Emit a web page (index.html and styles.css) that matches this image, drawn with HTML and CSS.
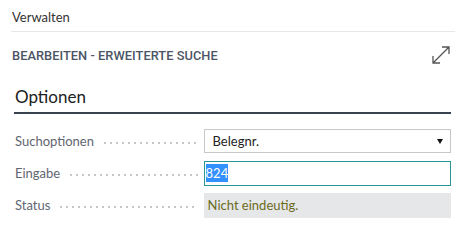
FILE: index.html
```html
<!DOCTYPE html>
<html>
<head>
<meta charset="utf-8">
<link rel="stylesheet" href="styles.css">
</head>
<body>
<div class="page">
  <div class="topbar">Verwalten</div>
  <div class="header">
    <div class="title">BEARBEITEN - ERWEITERTE SUCHE</div>
    <svg class="expand" width="20" height="20" viewBox="0 0 20 20">
      <path d="M2 18 L18 2 M11 2 H18 V9 M2 11 V18 H9" fill="none" stroke="#555" stroke-width="1.3"/>
    </svg>
  </div>
  <div class="section">
    <div class="section-title">Optionen</div>
    <div class="rows">
      <div class="row">
        <div class="label"><span>Suchoptionen</span><span class="dots"></span></div>
        <div class="value select"><span>Belegnr.</span><span class="arrow"></span></div>
      </div>
      <div class="row">
        <div class="label"><span>Eingabe</span><span class="dots"></span></div>
        <div class="value input"><span class="sel">824</span></div>
      </div>
      <div class="row">
        <div class="label"><span>Status</span><span class="dots"></span></div>
        <div class="value status">Nicht eindeutig.</div>
      </div>
    </div>
  </div>
</div>
</body>
</html>
```

FILE: styles.css
```css
html, body { margin: 0; padding: 0; background: #fff; }
body { font-family: Lato, "Open Sans", sans-serif; }
.page { width: 465px; height: 250px; overflow: hidden; }
.topbar {
  margin: 0 10px 0 11px;
  padding: 8px 0 0 1px;
  height: 23px;
  line-height: 18px;
  font-size: 13px;
  color: #333;
  border-bottom: 1px solid #e8e8e8;
}
.header {
  display: flex;
  align-items: center;
  justify-content: space-between;
  padding: 8px 14px 0 12px;
  height: 30px;
}
.title {
  font-family: Roboto, sans-serif;
  font-size: 12.8px;
  letter-spacing: 0.05px;
  color: #4b5565;
  font-weight: 500;
}
.section { padding: 16px 14px 0 14px; }
.section-title {
  font-size: 17px;
  line-height: 22px;
  color: #212121;
  padding-left: 1px;
  padding-bottom: 4px;
  border-bottom: 2px solid #394350;
}
.rows { padding-top: 15px; display: flex; flex-direction: column; gap: 8px; }
.row { display: flex; align-items: center; height: 24px; }
.label {
  width: 189px;
  display: flex;
  align-items: center;
  font-size: 13px;
  color: #5f6670;
  padding-left: 1px;
}
.dots {
  flex: 1;
  margin: 3px 6px 0 8px;
  height: 2px;
  background-image: radial-gradient(circle, #c4c4c4 0.7px, transparent 0.9px);
  background-size: 6px 2px;
  background-repeat: repeat-x;
}
.value {
  width: 248px;
  box-sizing: border-box;
  height: 24px;
  display: flex;
  align-items: center;
  font-size: 13px;
}
.select {
  border: 1px solid #c8c8c8;
  padding: 0 7px 0 8px;
  justify-content: space-between;
  color: #222;
}
.arrow {
  width: 0; height: 0;
  border-left: 3px solid transparent;
  border-right: 3px solid transparent;
  border-top: 5px solid #111;
}
.input {
  border: 1px solid #2c9696;
  height: 25px;
  padding-left: 1px;
}
.sel { background: #3390ff; color: #fff; padding: 1px 0; }
.status {
  background: #e6e7e8;
  color: #6b6b1e;
  padding-left: 4px;
  height: 25px;
}
```
